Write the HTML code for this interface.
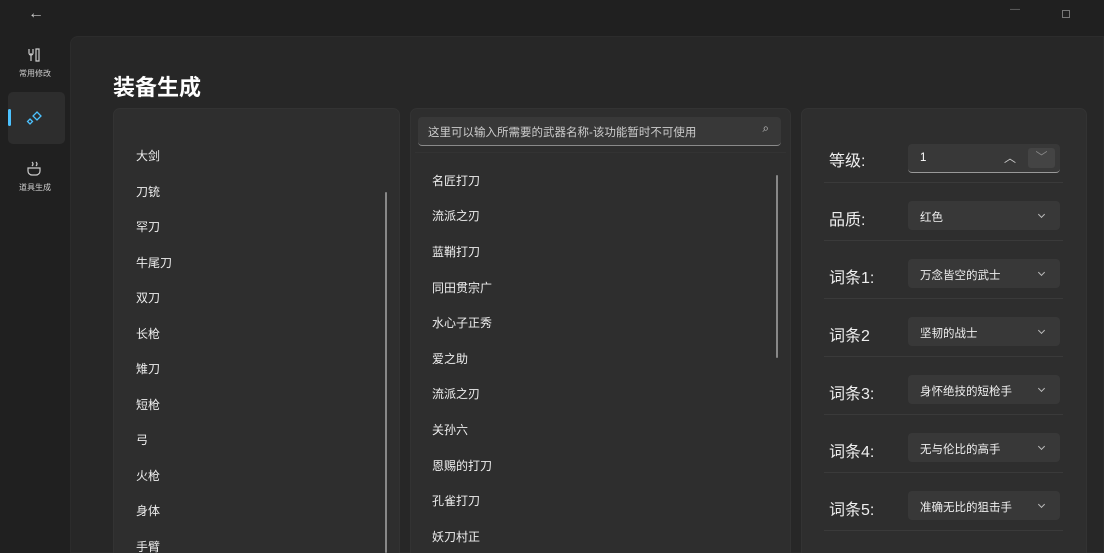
<!DOCTYPE html>
<html><head><meta charset="utf-8"><style>
*{margin:0;padding:0;box-sizing:border-box}
html,body{width:1104px;height:553px;overflow:hidden}
body{background:#202020;color:#fff;font-family:"Liberation Sans","Noto Sans CJK SC",sans-serif;position:relative}
.a{position:absolute}
.content{left:70px;top:36px;width:1034px;height:517px;background:#272727;border-top-left-radius:8px;border:1px solid #2c2c2c}
.panel{background:#2e2e2e;border-radius:7px;border:1px solid #333}
.li{position:absolute;font-size:12px;color:#eee}
.lbl{position:absolute;left:829px;font-size:16px;color:#eee}
.dd{position:absolute;left:908px;width:152px;height:29px;background:#383838;border-radius:4px;font-size:11.5px;color:#eee;padding:8px 0 0 12px}
.dd:after{content:"";position:absolute;right:16px;top:11px;width:4px;height:4px;border-right:1px solid #bbb;border-bottom:1px solid #bbb;transform:rotate(45deg)}
.sep{position:absolute;left:824px;width:239px;height:1px;background:#3a3a3a}
.nl{position:absolute;font-size:8px;color:#ccc;width:70px;text-align:center;left:0}
</style></head><body>
<div class="a" style="left:28px;top:5px;font-size:16px;color:#ccc">←</div>
<div class="a" style="left:1010px;top:4px;color:#777;font-size:10px">—</div>
<div class="a" style="left:1062px;top:10px;width:8px;height:8px;border:1px solid #777"></div>
<svg class="a" style="left:26px;top:47px" width="16" height="16"><path d="M3 2v4a2 2 0 0 0 4 0V2M5 6v8M10 2h3v12h-3z" fill="none" stroke="#ccc" stroke-width="1.2"/></svg>
<div class="nl" style="top:68px">常用修改</div>
<div class="a" style="left:8px;top:92px;width:57px;height:52px;background:#2d2d2d;border-radius:5px"></div>
<div class="a" style="left:8px;top:109px;width:3px;height:17px;background:#4cc2ff;border-radius:2px"></div>
<svg class="a" style="left:25px;top:109px" width="20" height="18"><path d="M12 3l4 4-4 4-4-4zM5 10l2.5 2.5L5 15l-2.5-2.5z" fill="none" stroke="#4cc2ff" stroke-width="1.3"/></svg>
<svg class="a" style="left:25px;top:159px" width="18" height="18"><path d="M3 9h12v3a4 4 0 0 1-4 4H7a4 4 0 0 1-4-4zM7 3q2 2 0 4M11 3q2 2 0 4" fill="none" stroke="#ccc" stroke-width="1.2"/></svg>
<div class="nl" style="top:182px">道具生成</div>
<div class="a content"></div>
<div class="a" style="left:113px;top:70px;font-size:22px;font-weight:bold">装备生成</div>
<div class="a panel" style="left:113px;top:108px;width:287px;height:460px"></div>
<div class="a panel" style="left:410px;top:108px;width:381px;height:460px"></div>
<div class="a panel" style="left:801px;top:108px;width:286px;height:460px"></div>
<div class="a" style="left:385px;top:192px;width:2px;height:361px;background:#888;border-radius:1px"></div>
<div class="a" style="left:776px;top:175px;width:2px;height:183px;background:#888;border-radius:1px"></div>
<div class="a" style="left:418px;top:117px;width:363px;height:29px;background:#383838;border-radius:4px;border-bottom:1px solid #8a8a8a;font-size:11.5px;color:#ccc;padding:7px 0 0 10px">这里可以输入所需要的武器名称-该功能暂时不可使用<span style="position:absolute;right:12px;top:6px">⌕</span></div>
<div class="a" style="left:415px;top:152px;width:371px;height:1px;background:#333"></div>
<div class="li" style="left:136px;top:147px">大剑</div>
<div class="li" style="left:136px;top:183px">刀铳</div>
<div class="li" style="left:136px;top:218px">罕刀</div>
<div class="li" style="left:136px;top:254px">牛尾刀</div>
<div class="li" style="left:136px;top:289px">双刀</div>
<div class="li" style="left:136px;top:325px">长枪</div>
<div class="li" style="left:136px;top:360px">雉刀</div>
<div class="li" style="left:136px;top:396px">短枪</div>
<div class="li" style="left:136px;top:431px">弓</div>
<div class="li" style="left:136px;top:467px">火枪</div>
<div class="li" style="left:136px;top:502px">身体</div>
<div class="li" style="left:136px;top:538px">手臂</div>
<div class="li" style="left:432px;top:172px">名匠打刀</div>
<div class="li" style="left:432px;top:207px">流派之刃</div>
<div class="li" style="left:432px;top:243px">蓝鞘打刀</div>
<div class="li" style="left:432px;top:279px">同田贯宗广</div>
<div class="li" style="left:432px;top:314px">水心子正秀</div>
<div class="li" style="left:432px;top:350px">爱之助</div>
<div class="li" style="left:432px;top:385px">流派之刃</div>
<div class="li" style="left:432px;top:421px">关孙六</div>
<div class="li" style="left:432px;top:457px">恩赐的打刀</div>
<div class="li" style="left:432px;top:492px">孔雀打刀</div>
<div class="li" style="left:432px;top:528px">妖刀村正</div>
<div class="lbl" style="top:147px">等级:</div>
<div class="a" style="left:908px;top:144px;width:152px;height:29px;background:#383838;border-radius:4px;border-bottom:1px solid #999;font-size:11.5px;padding:8px 0 0 12px">1</div>
<div class="a" style="left:1004px;top:149px;color:#ccc;font-size:12px">︿</div>
<div class="a" style="left:1028px;top:148px;width:27px;height:20px;background:#444;border-radius:3px;color:#888;font-size:12px;text-align:center">﹀</div>
<div class="sep" style="top:182px"></div>
<div class="lbl" style="top:206px">品质:</div><div class="dd" style="top:201px">红色</div>
<div class="sep" style="top:240px"></div>
<div class="lbl" style="top:264px">词条1:</div><div class="dd" style="top:259px">万念皆空的武士</div>
<div class="sep" style="top:298px"></div>
<div class="lbl" style="top:322px">词条2</div><div class="dd" style="top:317px">坚韧的战士</div>
<div class="sep" style="top:356px"></div>
<div class="lbl" style="top:380px">词条3:</div><div class="dd" style="top:375px">身怀绝技的短枪手</div>
<div class="sep" style="top:414px"></div>
<div class="lbl" style="top:438px">词条4:</div><div class="dd" style="top:433px">无与伦比的高手</div>
<div class="sep" style="top:472px"></div>
<div class="lbl" style="top:496px">词条5:</div><div class="dd" style="top:491px">准确无比的狙击手</div>
<div class="sep" style="top:530px"></div>
</body></html>
